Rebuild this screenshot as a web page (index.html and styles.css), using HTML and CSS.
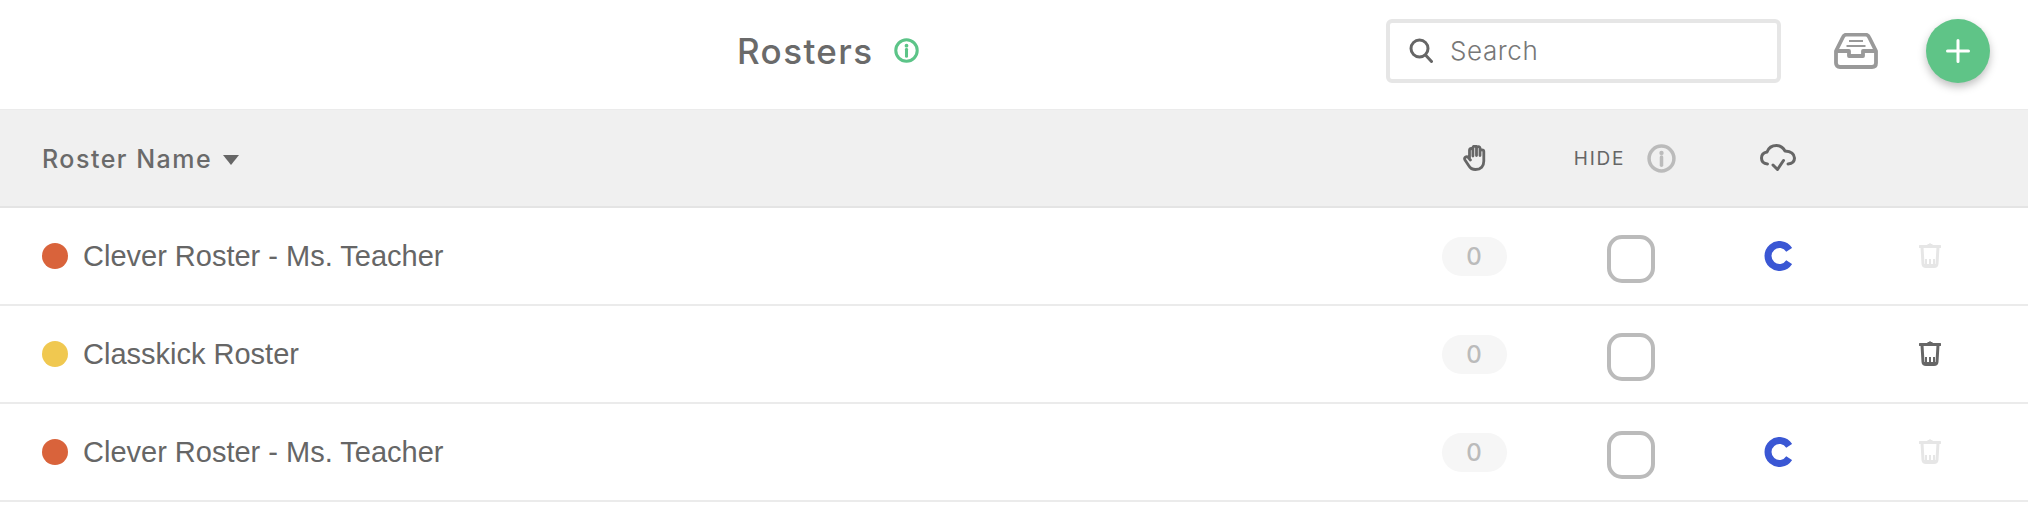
FILE: index.html
```html
<!DOCTYPE html>
<html lang="en">
<head>
  <meta charset="UTF-8">
  <title>Rosters</title>
  <link rel="stylesheet" href="styles.css">
</head>
<body>
  <svg class="defs" width="0" height="0">
    <symbol id="info" viewBox="0 0 28 28">
      <circle cx="14" cy="14" r="12" fill="none" stroke="currentColor" stroke-width="3.4"/>
      <circle cx="14" cy="8.6" r="2.100" fill="currentColor"/>
      <path d="M14 12.500v8" stroke="currentColor" stroke-width="3.400" stroke-linecap="round"/>
    </symbol>
    <symbol id="trash" viewBox="0 0 22 26">
      <path d="M1 4.500h20" stroke="currentColor" stroke-width="3" stroke-linecap="round"/>
      <path d="M8.500 3 Q11 0.500 13.500 3z" fill="currentColor" stroke="currentColor"/>
      <path d="M3 5l1 17q.2 2.500 3 2.500h8q2.800 0 3-2.500l1-17" fill="none" stroke="currentColor" stroke-width="3"/>
      <path d="M7 17v6M11 17v6M15 17v6" stroke="currentColor" stroke-width="2"/>
      <path d="M5 22h12v2H5z" fill="currentColor"/>
    </symbol>
    <symbol id="clever" viewBox="0 0 28 30">
      <path d="M25.200 8.800A11.500 11.500 0 1 0 25.200 21.200" fill="none" stroke="currentColor" stroke-width="7"/>
    </symbol>
  </svg>

  <div class="topbar">
    <div class="title">
      <h1>Rosters</h1>
      <svg class="title-info"><use href="#info"/></svg>
    </div>
    <div class="search">
      <svg width="24" height="25" viewBox="0 0 24 25" fill="none" stroke="#666" stroke-width="3">
        <circle cx="10.500" cy="10.500" r="8.500"/>
        <path d="M16.500 17l6 6.500" stroke-linecap="round"/>
      </svg>
      <span>Search</span>
    </div>
    <svg class="inbox" width="44" height="36" viewBox="0 0 44 36" fill="none" stroke="#999" stroke-width="3.800" stroke-linejoin="round">
      <path d="M2 18L9 4q1-2.300 3.500-2.300h19q2.500 0 3.500 2.300l7 14v12q0 4-4 4H6q-4 0-4-4z"/>
      <path d="M2 18h13v5h14v-5h13"/>
      <path d="M15 8h14M12.500 13h19" stroke-width="2.200"/>
    </svg>
    <button class="add">
      <svg width="24" height="24" viewBox="0 0 24 24" stroke="#fff" stroke-width="3" stroke-linecap="round"><path d="M12 1.500v21M1.500 12h21"/></svg>
    </button>
  </div>

  <div class="row head">
    <div class="name-head">Roster Name <i class="caret"></i></div>
    <div class="cell">
      <svg width="23" height="26" viewBox="0 0 23 26" fill="none" stroke="#666" stroke-width="2.800" stroke-linecap="round" stroke-linejoin="round">
        <path d="M6.500 13V5.500q0-2 1.700-2t1.700 2V11M9.900 10V3q0-1.800 1.800-1.800T13.500 3v7.500M13.500 10V3.500q0-1.800 1.800-1.800t1.700 1.800v7M17 10V6.500q0-1.700 1.900-1.700t1.900 1.700V16q0 8.500-8.300 8.500-4.500 0-6.500-3.500l-4-6q-1-1.700.4-2.800 1.500-1 2.900.4l2.100 2.400"/>
      </svg>
    </div>
    <div class="cell hide-head">
      <span>HIDE</span>
      <svg class="hide-info"><use href="#info"/></svg>
    </div>
    <div class="cell">
      <svg width="36" height="28" viewBox="0 0 36 28" fill="none" stroke="#666" stroke-width="3" stroke-linecap="round" stroke-linejoin="round">
        <path d="M7.500 20Q1.500 19.500 1.500 14q0-5 5.500-6Q9.500 1.500 16.500 1.500 22 1.500 25 7q9 .5 9.500 7 0 5.500-6.500 6"/>
        <path d="M13 21l4.500 4.500 6-9"/>
      </svg>
    </div>
    <div class="cell"></div>
  </div>

  <div class="row">
    <div class="name"><i class="dot red"></i>Clever Roster - Ms. Teacher</div>
    <div class="cell"><span class="pill">0</span></div>
    <div class="cell"><span class="check"></span></div>
    <div class="cell"><svg class="clever"><use href="#clever"/></svg></div>
    <div class="cell"><svg class="bin off"><use href="#trash"/></svg></div>
  </div>
  <div class="row">
    <div class="name"><i class="dot yellow"></i>Classkick Roster</div>
    <div class="cell"><span class="pill">0</span></div>
    <div class="cell"><span class="check"></span></div>
    <div class="cell"></div>
    <div class="cell"><svg class="bin"><use href="#trash"/></svg></div>
  </div>
  <div class="row">
    <div class="name"><i class="dot red"></i>Clever Roster - Ms. Teacher</div>
    <div class="cell"><span class="pill">0</span></div>
    <div class="cell"><span class="check"></span></div>
    <div class="cell"><svg class="clever"><use href="#clever"/></svg></div>
    <div class="cell"><svg class="bin off"><use href="#trash"/></svg></div>
  </div>
</body>
</html>
```

FILE: styles.css
```css
* {
  box-sizing: border-box;
  margin: 0;
  padding: 0;
}
body {
  background: #fff;
  color: #666;
  font-family: "Inter", "Liberation Sans", sans-serif;
}
.defs {
  display: block;
  height: 0;
}
.topbar {
  display: flex;
  align-items: center;
  height: 110px;
  padding: 0 38px 8px 737px;
  border-bottom: 1px solid #ebebeb;
}
.title {
  display: flex;
  align-items: center;
  gap: 20px;
}
.title h1 {
  font-size: 35px;
  font-weight: 500;
  letter-spacing: 1.400px;
  color: #6a6a6a;
}
.title-info {
  width: 25px;
  height: 25px;
  color: #5cc488;
}
.search {
  display: flex;
  align-items: center;
  gap: 17px;
  width: 395px;
  height: 64px;
  margin-left: auto;
  padding-left: 19px;
  border: 4px solid #e6e6e6;
  border-radius: 6px;
  font-size: 26px;
  font-weight: 300;
  letter-spacing: .6px;
  color: #777;
}
.inbox {
  margin-left: 53px;
}
.add {
  display: flex;
  align-items: center;
  justify-content: center;
  width: 64px;
  height: 64px;
  margin-left: 48px;
  border: none;
  border-radius: 50%;
  background: #5fc487;
  box-shadow: 0 4px 9px rgba(0,0,0,.25);
}
.row {
  display: grid;
  grid-template-columns: 1fr 128px 186px 108px 196px;
  align-items: center;
  height: 98px;
  padding-left: 42px;
  border-bottom: 2px solid #ebebeb;
}
.head {
  background: #f0f0f0;
  border-bottom-color: #e4e4e4;
}
.name-head {
  display: flex;
  align-items: center;
  gap: 11px;
  padding-top: 1px;
  font-size: 25px;
  font-weight: 500;
  letter-spacing: 1.500px;
  color: #6a6a6a;
}
.caret {
  width: 0;
  height: 0;
  margin-top: 2px;
  border-left: 8px solid transparent;
  border-right: 8px solid transparent;
  border-top: 10px solid #666;
}
.name {
  display: flex;
  align-items: center;
  gap: 15px;
  font-family: "Liberation Sans", sans-serif;
  font-size: 29px;
  color: #666;
}
.dot {
  width: 26px;
  height: 26px;
  border-radius: 50%;
}
.red {
  background: #d9633b;
}
.yellow {
  background: #f0c850;
}
.cell {
  display: flex;
  align-items: center;
  justify-content: center;
}
.hide-head {
  gap: 22px;
  padding-right: 12px;
  font-size: 19px;
  font-weight: 400;
  letter-spacing: 1.800px;
}
.hide-info {
  width: 29px;
  height: 29px;
  color: #bbb;
}
.pill {
  width: 65px;
  height: 39px;
  border-radius: 20px;
  background: #f6f6f6;
  color: #bbb;
  font-size: 24px;
  font-weight: 500;
  line-height: 39px;
  text-align: center;
}
.check {
  width: 48px;
  height: 48px;
  margin-top: 6px;
  border: 4px solid #bbb;
  border-radius: 15px;
}
.clever {
  width: 28px;
  height: 30px;
  color: #3a57d4;
}
.bin {
  width: 22px;
  height: 26px;
  margin-bottom: 3px;
  color: #666;
}
.bin.off {
  color: #e6e6e6;
}
```
